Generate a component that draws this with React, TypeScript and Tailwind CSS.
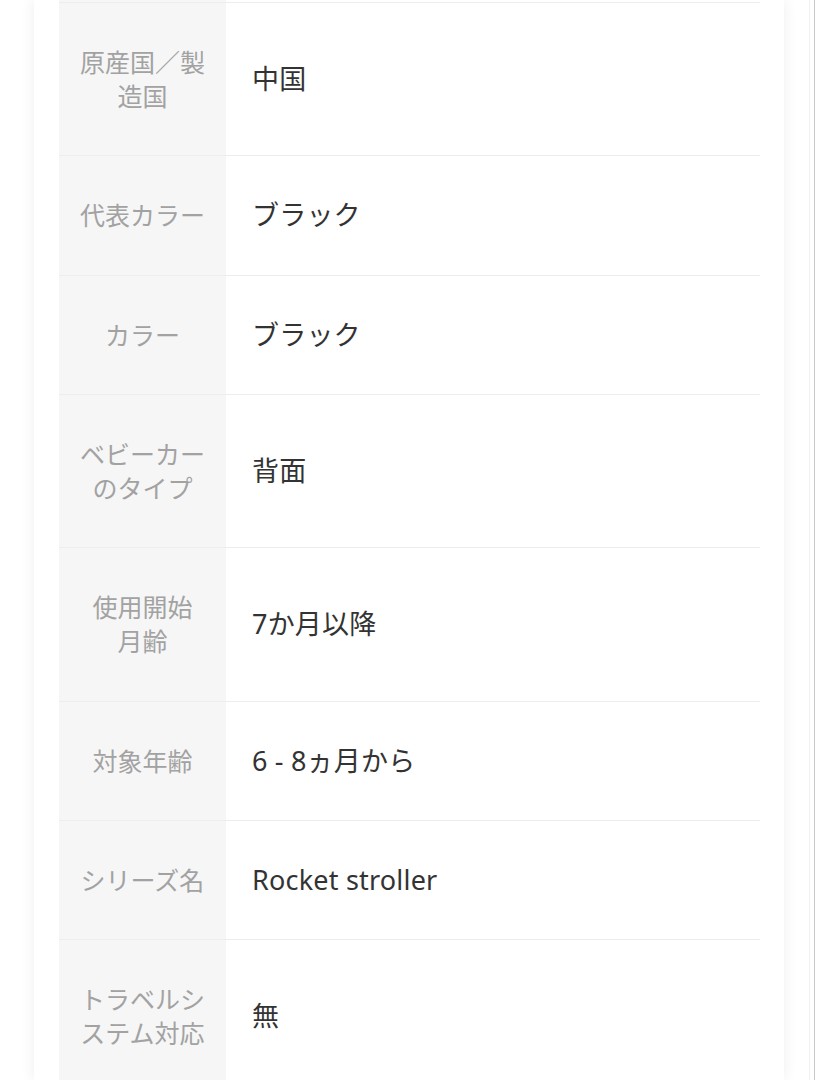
import React from 'react';

// Spec rows of the product detail table
interface SpecRow {
  label: string[];
  value: string;
  extra?: boolean; // one more pixel of bottom padding
}

const rows: SpecRow[] = [
  { label: ['原産国／製', '造国'], value: '中国' },
  { label: ['代表カラー'], value: 'ブラック', extra: true },
  { label: ['カラー'], value: 'ブラック' },
  { label: ['ベビーカー', 'のタイプ'], value: '背面' },
  { label: ['使用開始', '月齢'], value: '7か月以降', extra: true },
  { label: ['対象年齢'], value: '6 - 8ヵ月から' },
  { label: ['シリーズ名'], value: 'Rocket stroller' },
  { label: ['トラベルシ', 'ステム対応'], value: '無' },
];

const font = { fontFamily: '"Noto Sans", "Noto Sans CJK JP", sans-serif' };

const Row: React.FC<{ row: SpecRow }> = ({ row }) => (
  <div className="flex border-b border-[#ededed]">
    <div
      className={`w-[167px] shrink-0 bg-[#f6f6f6] px-[16px] pt-[42px] text-center text-[25px] leading-[34px] text-[#a2a2a2] ${
        row.extra ? 'pb-[43px]' : 'pb-[42px]'
      }`}
    >
      {row.label.map((l) => (
        <div key={l}>{l}</div>
      ))}
    </div>
    <div className="flex flex-1 items-center pl-[26px] text-[27px] tracking-[0.2px] text-[#333333]">{row.value}</div>
  </div>
);

export default function App() {
  return (
    <div className="flex h-[1080px] overflow-hidden bg-white" style={font}>
      <div className="w-[34px] shrink-0" />
      <div className="w-[750px] shrink-0 bg-white pl-[25px] pr-[24px] shadow-[0_0_14px_rgba(0,0,0,0.07)]">
        {/* tail of the previous row */}
        <div className="flex h-[3px] border-b border-[#ededed]">
          <div className="w-[167px] bg-[#f6f6f6]" />
          <div className="flex-1" />
        </div>
        {rows.map((r) => (
          <Row key={r.value + r.label.join('')} row={r} />
        ))}
      </div>
      <div className="w-[25px] shrink-0" />
      <div className="w-px shrink-0 bg-[#f1f1f1]" />
      <div className="w-[4px] shrink-0" />
      <div className="w-px shrink-0 bg-[#c9c9c9]" />
    </div>
  );
}
